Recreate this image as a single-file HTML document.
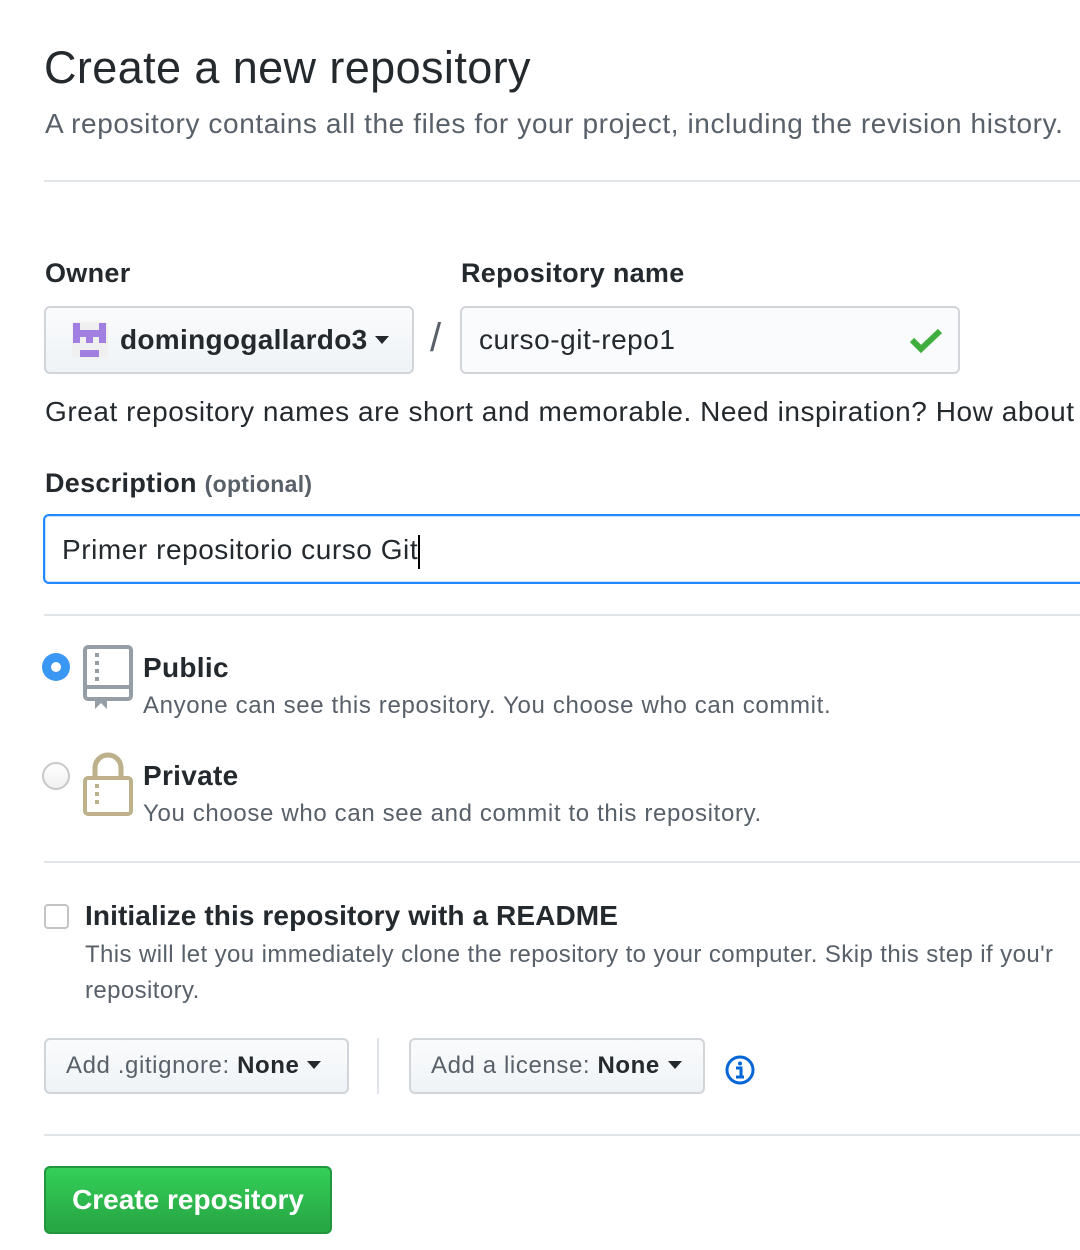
<!DOCTYPE html>
<html><head><meta charset="utf-8">
<style>
*{box-sizing:border-box;margin:0;padding:0}
html,body{width:1080px;height:1250px;overflow:hidden;background:#fff}
body{font-family:"Liberation Sans",sans-serif;color:#24292e;position:relative}
.a{position:absolute;white-space:nowrap}
.hr{position:absolute;left:44px;right:0;height:2px;background:#e1e4e8}
.lbl{font-weight:bold;font-size:27px;letter-spacing:0.3px}
.box{position:absolute;border:2px solid #d1d5da;border-radius:6px}
.btn{background:linear-gradient(#fafbfc,#eff3f6);}
.caret{display:inline-block;width:0;height:0;border-left:7px solid transparent;border-right:7px solid transparent;border-top:8px solid #24292e;vertical-align:middle;margin-left:8px;position:relative;top:-2px}
.gray{color:#586069}
.ls{letter-spacing:0.55px}
.p{position:absolute;background:#a07fe0}
</style></head><body>
<div class="a" style="left:44px;top:40px;font-size:45px;line-height:56px;letter-spacing:0.4px">Create a new repository</div>
<div class="a gray ls" style="left:45px;top:106px;font-size:28px;line-height:36px;letter-spacing:0.6px">A repository contains all the files for your project, including the revision history.</div>
<div class="hr" style="top:180px"></div>

<div class="a lbl" style="left:45px;top:258px">Owner</div>
<div class="a lbl" style="left:461px;top:258px">Repository name</div>

<div class="box btn" style="left:44px;top:306px;width:370px;height:68px"></div>
<div class="a" style="left:72px;top:322px;width:36px;height:36px;background:#f0f0f0;border-radius:4px"></div>
<div class="p" style="left:73px;top:323px;width:7px;height:20px"></div>
<div class="p" style="left:99px;top:323px;width:7px;height:20px"></div>
<div class="p" style="left:73px;top:330px;width:33px;height:7px"></div>
<div class="p" style="left:86px;top:336px;width:7px;height:7px"></div>
<div class="a" style="left:80px;top:330px;width:6px;height:7px;background:#a07fe0"></div>
<div class="p" style="left:80px;top:350px;width:19px;height:7px"></div>
<div class="a" style="left:120px;top:322px;font-size:28px;line-height:36px;font-weight:bold;letter-spacing:0.3px">domingogallardo3<span class="caret"></span></div>
<div class="a" style="left:430px;top:316px;font-size:40px;color:#586069;font-weight:300">/</div>

<div class="box" style="left:460px;top:306px;width:500px;height:68px;background:#fafbfc"></div>
<div class="a ls" style="left:479px;top:322px;font-size:28px;line-height:36px">curso-git-repo1</div>
<svg class="a" style="left:908px;top:326px" width="36" height="28" viewBox="0 0 36 28"><path d="M4 14 L13 23 L32 5" stroke="#3fae3f" stroke-width="6" fill="none"/></svg>

<div class="a ls" style="left:45px;top:394px;font-size:28px;line-height:36px;width:1035px;overflow:hidden">Great repository names are short and memorable. Need inspiration? How about c</div>

<div class="a lbl" style="left:45px;top:468px">Description <span class="gray" style="font-size:23px">(optional)</span></div>
<div class="a" style="left:43px;top:514px;width:1060px;height:70px;border:2px solid #2188ff;border-radius:6px;box-shadow:0 0 0 1px rgba(3,102,214,.2) inset;background:#fff"></div>
<div class="a ls" style="left:62px;top:532px;font-size:28px;line-height:36px">Primer repositorio curso Git<span style="display:inline-block;width:2px;height:34px;background:#000;vertical-align:middle"></span></div>

<div class="hr" style="top:614px"></div>

<div class="a" style="left:42px;top:653px;width:28px;height:28px;border-radius:50%;background:#3b97f4"></div>
<div class="a" style="left:51px;top:662px;width:10px;height:10px;border-radius:50%;background:#fff"></div>
<svg class="a" style="left:83px;top:645px" width="50" height="66" viewBox="0 0 50 66">
 <rect x="2" y="2" width="46" height="52" rx="3" fill="none" stroke="#959da5" stroke-width="4"/>
 <rect x="2" y="40" width="46" height="4" fill="#959da5"/>
 <rect x="12" y="8" width="4" height="4" fill="#959da5"/><rect x="12" y="16" width="4" height="4" fill="#959da5"/><rect x="12" y="24" width="4" height="4" fill="#959da5"/><rect x="12" y="32" width="4" height="4" fill="#959da5"/>
 <path d="M12 52 H24 V64 L18 58 L12 64 Z" fill="#959da5"/>
</svg>
<div class="a" style="left:143px;top:650px;font-size:28px;font-weight:bold;line-height:36px;letter-spacing:0.3px">Public</div>
<div class="a gray" style="left:143px;top:690px;font-size:24px;line-height:32px;letter-spacing:0.65px">Anyone can see this repository. You choose who can commit.</div>

<div class="a" style="left:42px;top:762px;width:28px;height:28px;border-radius:50%;border:2px solid #c8c8c8;background:linear-gradient(#fff,#f0f0f0)"></div>
<svg class="a" style="left:83px;top:752px" width="50" height="64" viewBox="0 0 50 64">
 <path d="M12 26 V16 A13 13 0 0 1 38 16 V26" fill="none" stroke="#bcb18b" stroke-width="5"/>
 <rect x="2" y="26" width="46" height="36" rx="3" fill="none" stroke="#bcb18b" stroke-width="4"/>
 <rect x="12" y="32" width="4" height="4" fill="#bcb18b"/><rect x="12" y="40" width="4" height="4" fill="#bcb18b"/><rect x="12" y="48" width="4" height="4" fill="#bcb18b"/>
</svg>
<div class="a" style="left:143px;top:758px;font-size:28px;font-weight:bold;line-height:36px;letter-spacing:0.3px">Private</div>
<div class="a gray" style="left:143px;top:798px;font-size:24px;line-height:32px;letter-spacing:0.65px">You choose who can see and commit to this repository.</div>

<div class="hr" style="top:861px"></div>

<div class="a" style="left:44px;top:904px;width:25px;height:25px;border:2px solid #c4c4c4;border-radius:4px;background:#fff"></div>
<div class="a" style="left:85px;top:898px;font-size:28px;font-weight:bold;line-height:36px;letter-spacing:0.1px">Initialize this repository with a README</div>
<div class="a gray" style="left:85px;top:937px;font-size:24px;line-height:36px;width:995px;overflow:hidden;letter-spacing:0.4px">This will let you immediately clone the repository to your computer. Skip this step if you'r<br>repository.</div>

<div class="box btn" style="left:44px;top:1038px;width:305px;height:56px"></div>
<div class="a" style="left:66px;top:1050px;font-size:24px;line-height:32px;letter-spacing:0.6px"><span class="gray">Add .gitignore:</span> <b>None</b><span class="caret"></span></div>
<div class="a" style="left:377px;top:1038px;width:2px;height:56px;background:#e1e4e8"></div>
<div class="box btn" style="left:409px;top:1038px;width:296px;height:56px"></div>
<div class="a" style="left:431px;top:1050px;font-size:24px;line-height:32px;letter-spacing:0.6px"><span class="gray">Add a license:</span> <b>None</b><span class="caret"></span></div>
<svg class="a" style="left:724px;top:1054px" width="32" height="32" viewBox="0 0 32 32"><circle cx="16" cy="16" r="13" fill="none" stroke="#0366d6" stroke-width="3"/><circle cx="16" cy="9.5" r="2" fill="#0366d6"/><path d="M12 14 H17 V22 M12 23 H20" stroke="#0366d6" stroke-width="3" fill="none"/></svg>

<div class="hr" style="top:1134px"></div>

<div class="a" style="left:44px;top:1166px;width:288px;height:68px;border-radius:6px;background:linear-gradient(#34d058,#28a745 90%);border:2px solid #23963d"></div>
<div class="a" style="left:44px;top:1182px;width:288px;text-align:center;font-size:28px;font-weight:bold;color:#fff;line-height:36px">Create repository</div>
</body></html>
